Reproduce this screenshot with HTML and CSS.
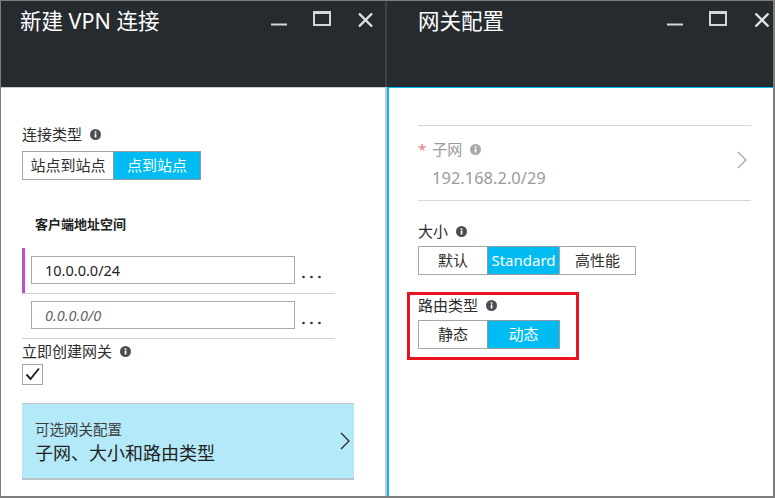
FILE: index.html
```html
<!DOCTYPE html>
<html lang="zh-CN">
<head>
<meta charset="utf-8">
<title>新建 VPN 连接</title>
<link rel="stylesheet" href="styles.css">
</head>
<body>
<div class="frame">
  <section class="panel panel-left">
    <header class="bar bar-left">
      <h1 class="title">新建 VPN 连接</h1>
      <div class="ctrls">
        <svg class="ic-min" width="16" height="30" viewBox="0 0 16 30"><rect x="0" y="22.5" width="16" height="2" fill="#d4d6d8"/></svg>
        <svg class="ic-max" width="18" height="30" viewBox="0 0 18 30"><path d="M0 10H18V25H0Z M2 13V23H16V13Z" fill="#d4d6d8" fill-rule="evenodd"/></svg>
        <svg class="ic-close" width="15" height="30" viewBox="0 0 15 30"><path d="M1 12.5L14 25.5M14 12.5L1 25.5" stroke="#dfe1e3" stroke-width="2.4"/></svg>
      </div>
    </header>
    <div class="body body-left">
      <div class="label label-first">连接类型 <svg class="info" width="11" height="11" viewBox="0 0 11 11"><circle cx="5.5" cy="5.5" r="5.5" fill="#4b4f54"/><rect x="4.7" y="4.5" width="1.7" height="4" fill="#fff"/><rect x="4.7" y="2.3" width="1.7" height="1.5" fill="#fff"/></svg></div>
      <div class="seg seg-type">
        <span class="opt w91">站点到站点</span><span class="opt on w87">点到站点</span>
      </div>
      <div class="sub">客户端地址空间</div>
      <div class="addr addr-first">
        <span class="mark"></span>
        <div class="input">10.0.0.0/24</div>
        <svg class="dots" width="19" height="4" viewBox="0 0 19 4"><circle cx="1.5" cy="2" r="1.3" fill="#333"/><circle cx="9.5" cy="2" r="1.3" fill="#333"/><circle cx="17.5" cy="2" r="1.3" fill="#333"/></svg>
      </div>
      <div class="addr addr-second">
        <span class="mark mark-off"></span>
        <div class="input placeholder">0.0.0.0/0</div>
        <svg class="dots" width="19" height="4" viewBox="0 0 19 4"><circle cx="1.5" cy="2" r="1.3" fill="#333"/><circle cx="9.5" cy="2" r="1.3" fill="#333"/><circle cx="17.5" cy="2" r="1.3" fill="#333"/></svg>
      </div>
      <div class="label label-gw">立即创建网关 <svg class="info" width="11" height="11" viewBox="0 0 11 11"><circle cx="5.5" cy="5.5" r="5.5" fill="#4b4f54"/><rect x="4.7" y="4.5" width="1.7" height="4" fill="#fff"/><rect x="4.7" y="2.3" width="1.7" height="1.5" fill="#fff"/></svg></div>
      <div class="check"><svg width="19" height="19" viewBox="0 0 19 19"><path d="M3.5 9.5L7.5 14L16 3.5" fill="none" stroke="#222" stroke-width="1.9"/></svg></div>
      <div class="card">
        <div class="card-text">
          <div class="card-top">可选网关配置</div>
          <div class="card-main">子网、大小和路由类型</div>
        </div>
        <svg class="chev" width="10" height="18" viewBox="0 0 10 18"><path d="M1 1L9 9L1 17" fill="none" stroke="#2a2a2a" stroke-width="1.3"/></svg>
      </div>
    </div>
  </section>
  <div class="split"></div>
  <section class="panel panel-right">
    <header class="bar bar-right">
      <h1 class="title title-right">网关配置</h1>
      <div class="ctrls">
        <svg class="ic-min" width="16" height="30" viewBox="0 0 16 30"><rect x="0" y="22.5" width="16" height="2" fill="#d4d6d8"/></svg>
        <svg class="ic-max" width="18" height="30" viewBox="0 0 18 30"><path d="M0 10H18V25H0Z M2 13V23H16V13Z" fill="#d4d6d8" fill-rule="evenodd"/></svg>
        <svg class="ic-close" width="16" height="30" viewBox="0 0 16 30"><path d="M1.5 12.5L14.5 25.5M14.5 12.5L1.5 25.5" stroke="#dfe1e3" stroke-width="2.4"/></svg>
      </div>
    </header>
    <div class="body body-right">
      <div class="rule"></div>
      <div class="subnet">
        <div class="subnet-text">
          <div class="subnet-label"><span class="req">*</span> 子网 <svg class="info" width="11" height="11" viewBox="0 0 11 11"><circle cx="5.5" cy="5.5" r="5.5" fill="#a9a9a9"/><rect x="4.7" y="4.5" width="1.7" height="4" fill="#fff"/><rect x="4.7" y="2.3" width="1.7" height="1.5" fill="#fff"/></svg></div>
          <div class="subnet-value">192.168.2.0/29</div>
        </div>
        <svg class="chev chev-gray" width="10" height="18" viewBox="0 0 10 18"><path d="M1 1L9 9L1 17" fill="none" stroke="#a6a6a6" stroke-width="1.3"/></svg>
      </div>
      <div class="label label-size">大小 <svg class="info" width="11" height="11" viewBox="0 0 11 11"><circle cx="5.5" cy="5.5" r="5.5" fill="#4b4f54"/><rect x="4.7" y="4.5" width="1.7" height="4" fill="#fff"/><rect x="4.7" y="2.3" width="1.7" height="1.5" fill="#fff"/></svg></div>
      <div class="seg seg-size">
        <span class="opt w70">默认</span><span class="opt on w73">Standard</span><span class="opt w76">高性能</span>
      </div>
      <div class="highlight">
        <div class="label label-route">路由类型 <svg class="info" width="11" height="11" viewBox="0 0 11 11"><circle cx="5.5" cy="5.5" r="5.5" fill="#4b4f54"/><rect x="4.7" y="4.5" width="1.7" height="4" fill="#fff"/><rect x="4.7" y="2.3" width="1.7" height="1.5" fill="#fff"/></svg></div>
        <div class="seg seg-route">
          <span class="opt w70">静态</span><span class="opt on w73">动态</span>
        </div>
      </div>
    </div>
  </section>
</div>
</body>
</html>
```

FILE: styles.css
```css
* { box-sizing: border-box; margin: 0; padding: 0; }
html, body { background: #fff; }
body {
  margin: 0;
  font-family: "Noto Sans", "Noto Sans CJK SC", sans-serif;
  color: #333;
}
.frame {
  width: 775px;
  height: 498px;
  display: flex;
  border-style: solid;
  border-color: #7d7d7d;
  border-width: 1px 2px 2px 1px;
  overflow: hidden;
}
.panel {
  display: flex;
  flex-direction: column;
}
.panel-left { width: 384px; }
.panel-right { width: 386px; }
.split {
  width: 2px;
  background: linear-gradient(#3d4247 0 86px, #c6c6c6 86px);
}
.bar {
  height: 86px;
  background: #262b30;
  display: flex;
  align-items: flex-start;
}
.bar-left { padding: 0 12px 0 19px; }
.bar-right { padding: 0 3px 0 31px; }
.title {
  font-family: "Noto Sans", "Noto Sans CJK SC", sans-serif;
  font-weight: 400;
  font-size: 21.5px;
  line-height: 28px;
  color: #fff;
  padding-top: 6px;
}
.ctrls {
  margin-left: auto;
  display: flex;
  gap: 26px;
}
.ctrls svg { display: block; }
.ic-close { margin-left: 1px; }

.body { flex: 1; }
.body-left {
  border-top: 1px solid #c9c9c9;
  padding-left: 21px;
}
.body-right {
  border-top: 1px solid #00bcf2;
  border-left: 2px solid #00bcf2;
  padding-left: 29px;
}

.label {
  font-size: 15px;
  line-height: 20px;
  height: 20px;
  color: #2d2d2d;
  display: flex;
  align-items: center;
}
.info { margin-left: 8px; display: block; }
.label-first { margin-top: 36px; }

.seg { display: flex; margin-top: 7px; }
.opt {
  height: 29px;
  border: 1px solid #a6a6a6;
  font-size: 15px;
  line-height: 27px;
  text-align: center;
  color: #2d2d2d;
  background: #fff;
}
.opt + .opt { margin-left: -1px; }
.opt.on { background: #00bcf2; color: #fff; border-color: #8f9ba0; }
.w91 { width: 92px; }
.w87 { width: 88px; }
.w70 { width: 70px; }
.w73 { width: 73px; }
.w76 { width: 77px; }

.sub {
  margin-top: 35px;
  padding-left: 13px;
  font-size: 13px;
  font-weight: 700;
  line-height: 18px;
  color: #222;
}

.addr {
  width: 313px;
  display: flex;
  align-items: flex-start;
  border-bottom: 1px solid #cfcfcf;
}
.addr-first { margin-top: 15px; height: 46px; }
.addr-second { height: 45px; }
.mark { width: 3px; height: 45px; background: #c44ad6; flex: none; }
.mark-off { background: transparent; height: 44px; }
.input {
  margin-left: 6px;
  width: 264px;
  height: 28px;
  border: 1px solid #a9a9a9;
  padding-left: 13px;
  font-size: 14.5px;
  line-height: 26px;
  color: #222;
}
.addr-first .input { margin-top: 8px; }
.addr-second .input { margin-top: 7px; }
.placeholder { font-style: italic; color: #666; }
.dots { margin-left: 7px; margin-top: 27px; display: block; }

.label-gw { margin-top: 2px; }
.check {
  margin-top: 3px;
  width: 21px;
  height: 21px;
  border: 1px solid #a6a6a6;
}
.check svg { display: block; }

.card {
  margin-top: 18px;
  width: 332px;
  height: 77px;
  background: #b3e9f8;
  border-top: 1px solid #c2c8cb;
  border-bottom: 2px solid #b7c3c8;
  display: flex;
  align-items: center;
  padding: 0 4px 0 13px;
}
.card-text { flex: 1; padding-top: 2px; }
.card-top { font-size: 14.5px; line-height: 18px; color: #3d3d3d; }
.card-main { font-size: 18px; line-height: 24px; color: #222; margin-top: 3px; }
.chev { display: block; }

.rule {
  margin-top: 37px;
  width: 333px;
  height: 1px;
  background: #d6d6d6;
}
.subnet {
  width: 333px;
  height: 75px;
  border-bottom: 1px solid #d6d6d6;
  display: flex;
  align-items: center;
  padding: 0 4px 0 0;
}
.subnet-text { flex: 1; padding-top: 2px; }
.subnet-label {
  font-size: 15px;
  line-height: 20px;
  color: #9b9b9b;
  display: flex;
  align-items: center;
}
.req { color: #e87a7a; margin-right: 6px; font-size: 15px; }
.subnet-value {
  margin-top: 8px;
  padding-left: 14px;
  font-size: 16.5px;
  line-height: 22px;
  color: #9b9b9b;
}
.chev-gray { margin-top: -6px; }

.label-size { margin-top: 20px; }
.seg-size { margin-top: 5px; }

.highlight {
  margin-top: 17px;
  margin-left: -11px;
  width: 172px;
  height: 68px;
  border: 3px solid #e8141f;
  padding-left: 8px;
}
.label-route { margin-top: 0; }
.seg-route { margin-top: 5px; }
```
